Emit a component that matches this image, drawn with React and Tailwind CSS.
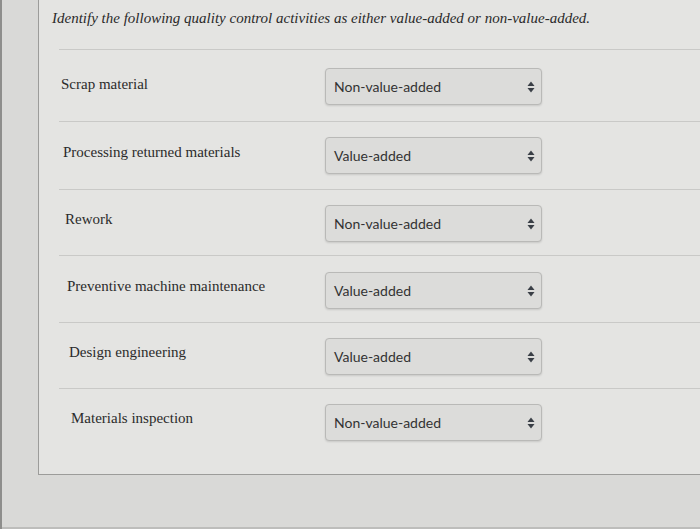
import React from "react";

const rows = [
  { label: "Scrap material", value: "Non-value-added", h: "h-[72px]", sel: "mt-[18px]", lp: "pl-[2px]", lt: "pt-[25px]" },
  { label: "Processing returned materials", value: "Value-added", h: "h-[68px]", sel: "mt-[15px]", lp: "pl-[4px]", lt: "pt-[21px]" },
  { label: "Rework", value: "Non-value-added", h: "h-[66px]", sel: "mt-[15px]", lp: "pl-[6px]", lt: "pt-[20px]" },
  { label: "Preventive machine maintenance", value: "Value-added", h: "h-[67px]", sel: "mt-[16px]", lp: "pl-[8px]", lt: "pt-[21px]" },
  { label: "Design engineering", value: "Value-added", h: "h-[66px]", sel: "mt-[15px]", lp: "pl-[10px]", lt: "pt-[20px]" },
  { label: "Materials inspection", value: "Non-value-added", h: "h-[85px]", sel: "mt-[15px]", lp: "pl-[12px]", lt: "pt-[20px]" },
];

function Arrows() {
  return (
    <svg width="8" height="12" viewBox="0 0 8 12" className="shrink-0">
      <path d="M4 0.5 L7.5 5 L0.5 5 Z" fill="#3a3f46" />
      <path d="M4 11.5 L7.5 7 L0.5 7 Z" fill="#3a3f46" />
    </svg>
  );
}

export default function App() {
  return (
    <div className="w-[700px] h-[529px] bg-[#d9d9d7] overflow-hidden flex flex-col border-l-2 border-[#8e8e8c]">
      <div className="ml-[36px] w-[664px] h-[475px] border-l border-b border-[#9c9c9a] bg-[#e4e4e2] flex flex-col">
        <div
          className="pl-[13px] pt-[7px] h-[49px] text-[15px] italic text-[#2a2a2a]"
          style={{ fontFamily: '"Liberation Serif", serif' }}
        >
          Identify the following quality control activities as either value-added or non-value-added.
        </div>
        <div className="ml-[20px] flex flex-col">
          {rows.map((r, i) => (
            <div
              key={i}
              className={`${r.h} border-t border-[#c9c9c7] flex items-start`}
            >
              <div
                className={`w-[266px] ${r.lp} ${r.lt} text-[15px] leading-[18px] text-[#2b2b2b]`}
                style={{ fontFamily: '"Liberation Serif", serif' }}
              >
                {r.label}
              </div>
              <div
                className={`${r.sel} w-[217px] h-[37px] rounded-[4px] border border-[#b9b9b7] bg-[#dcdcda] shadow-[0_1px_2px_rgba(0,0,0,0.12)] flex items-center justify-between pl-[8px] pr-[6px]`}
              >
                <span
                  className="text-[14px] text-[#333333]"
                  style={{ fontFamily: "Lato, sans-serif" }}
                >
                  {r.value}
                </span>
                <Arrows />
              </div>
            </div>
          ))}
        </div>
      </div>
      <div className="flex-1" />
      <div className="h-[2px] bg-[#bdbdbb]" />
    </div>
  );
}
